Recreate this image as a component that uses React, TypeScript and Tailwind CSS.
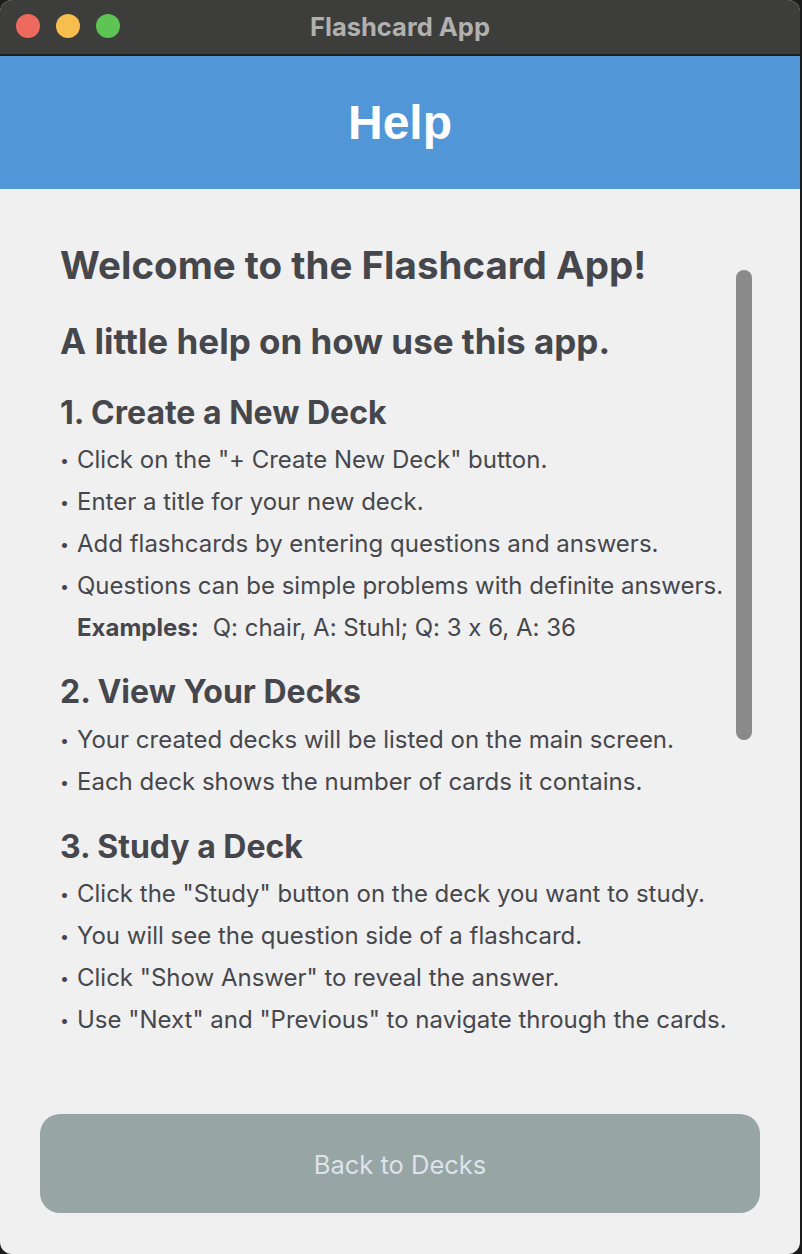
import React from "react";

const Bullet = ({ children }: { children: React.ReactNode }) => (
  <div className="flex items-center h-[42px] text-[24px] leading-[42px]">
    <span className="w-[17px] text-[16px]">•</span>
    <span>{children}</span>
  </div>
);

export default function App() {
  return (
    <div
      className="w-[802px] h-[1254px] bg-[#1c1c1c] [font-feature-settings:'calt'_0]"
      style={{ fontFamily: "Inter, 'Noto Sans', sans-serif" }}
    >
      <div className="relative w-[800px] h-[1254px] rounded-[12px] overflow-hidden bg-[#f0f0f0] flex flex-col">
        {/* Title bar */}
        <div className="relative h-[56px] bg-[#3d3d3b] border-b-2 border-[#1e1e1e] flex items-center justify-center shrink-0">
          <div className="absolute left-[16px] top-[14px] flex gap-[16px]">
            <div className="w-[24px] h-[24px] rounded-full bg-[#ee6a5f]" />
            <div className="w-[24px] h-[24px] rounded-full bg-[#f5be4f]" />
            <div className="w-[24px] h-[24px] rounded-full bg-[#5ec453]" />
          </div>
          <span className="text-[25.5px] font-bold text-[#b0b0b0]">Flashcard App</span>
        </div>
        {/* Header */}
        <div className="h-[133px] bg-[#5196d6] flex items-center justify-center shrink-0">
          <span
            className="text-[48px] leading-none font-bold text-white"
            style={{ fontFamily: "'Liberation Sans', Arial, sans-serif" }}
          >
            Help
          </span>
        </div>
        {/* Content */}
        <div className="relative flex-1 text-[#46474c]">
          <div className="pl-[60px] pt-[54px]">
            <h1 className="text-[38.5px] leading-[44px] font-bold">Welcome to the Flashcard App!</h1>
            <h2 className="mt-[34px] text-[35px] leading-[40px] font-bold">A little help on how use this app.</h2>
            <h3 className="mt-[34px] text-[32px] leading-[36px] font-bold">1. Create a New Deck</h3>
            <div className="mt-[8px]">
              <Bullet>Click on the "+ Create New Deck" button.</Bullet>
              <Bullet>Enter a title for your new deck.</Bullet>
              <Bullet>Add flashcards by entering questions and answers.</Bullet>
              <Bullet>Questions can be simple problems with definite answers.</Bullet>
              <div className="h-[42px] leading-[42px] text-[24px] pl-[17px]">
                <span className="font-bold">Examples:</span>
                <span className="ml-[14px]">Q: chair, A: Stuhl; Q: 3 x 6, A: 36</span>
              </div>
            </div>
            <h3 className="mt-[25px] text-[32px] leading-[36px] font-bold">2. View Your Decks</h3>
            <div className="mt-[9px]">
              <Bullet>Your created decks will be listed on the main screen.</Bullet>
              <Bullet>Each deck shows the number of cards it contains.</Bullet>
            </div>
            <h3 className="mt-[26px] text-[32px] leading-[36px] font-bold">3. Study a Deck</h3>
            <div className="mt-[8px]">
              <Bullet>Click the "Study" button on the deck you want to study.</Bullet>
              <Bullet>You will see the question side of a flashcard.</Bullet>
              <Bullet>Click "Show Answer" to reveal the answer.</Bullet>
              <Bullet>Use "Next" and "Previous" to navigate through the cards.</Bullet>
            </div>
          </div>
          <div className="absolute left-[736px] top-[81px] w-[16px] h-[470px] rounded-full bg-[#8a8a8a]" />
        </div>
        {/* Button */}
        <div className="px-[40px] pb-[41px] shrink-0">
          <div className="h-[99px] pt-[4px] rounded-[20px] bg-[#97a5a5] flex items-center justify-center">
            <span className="text-[25.5px] text-[#dde3e8]">Back to Decks</span>
          </div>
        </div>
      </div>
    </div>
  );
}
